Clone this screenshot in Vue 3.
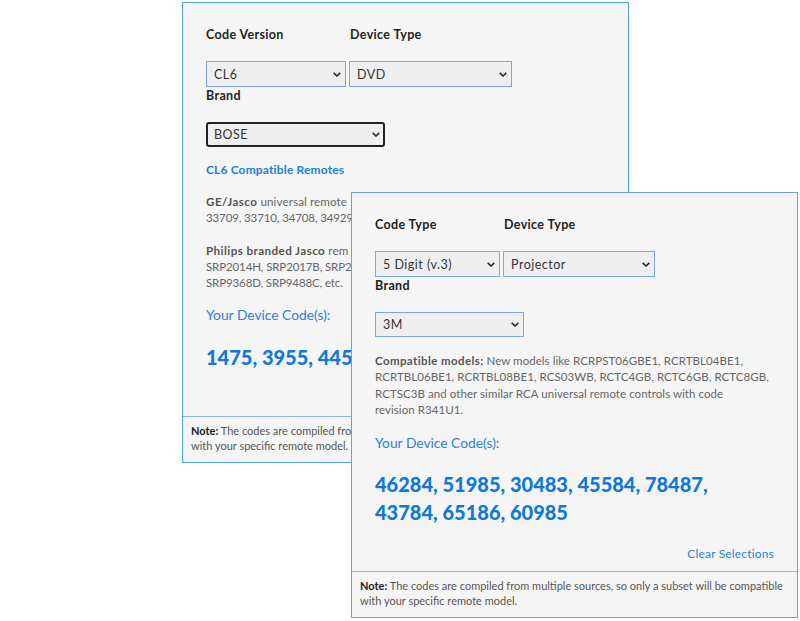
<template>
  <div class="canvas">
    <section class="win win-back">
      <div class="body">
        <div class="labels">
          <label class="lbl lbl-version">Code Version</label>
          <label class="lbl">Device Type</label>
        </div>
        <div class="selects">
          <select class="sel sel-version"><option>CL6</option></select>
          <select class="sel sel-device"><option>DVD</option></select>
        </div>
        <label class="lbl brand">Brand</label>
        <select class="sel sel-bose"><option>BOSE</option></select>
        <a class="compat-link">CL6 Compatible Remotes</a>
        <p class="txt first"><b>GE/Jasco</b> universal remote<br /><span class="nums">33709, 33710, 34708, 34929,</span></p>
        <p class="txt"><b>Philips branded Jasco</b> rem<br /><span class="nums">SRP2014H, SRP2017B, SRP2</span><br /><span class="nums">SRP9368D, SRP9488C, etc.</span></p>
        <div class="your">Your Device Code(s):</div>
        <div class="codes">1475, 3955, 445</div>
      </div>
      <div class="note note-back"><b>Note:</b> The codes are compiled fro<br />with your specific remote model.</div>
    </section>

    <section class="win win-front">
      <div class="body">
        <div class="labels">
          <label class="lbl lbl-type">Code Type</label>
          <label class="lbl">Device Type</label>
        </div>
        <div class="selects">
          <select class="sel sel-type"><option>5 Digit (v.3)</option></select>
          <select class="sel sel-proj"><option>Projector</option></select>
        </div>
        <label class="lbl brand">Brand</label>
        <select class="sel sel-3m"><option>3M</option></select>
        <p class="txt models"><b>Compatible models:</b> New models like RCRPST06GBE1, RCRTBL04BE1, RCRTBL06BE1, RCRTBL08BE1, RCS03WB, RCTC4GB, RCTC6GB, RCTC8GB, RCTSC3B and other similar RCA universal remote controls with code<br />revision R341U1.</p>
        <div class="your">Your Device Code(s):</div>
        <div class="codes">46284, 51985, 30483, 45584, 78487, 43784, 65186, 60985</div>
        <div class="clear-row"><a class="clear">Clear Selections</a></div>
      </div>
      <div class="note"><b>Note:</b> The codes are compiled from multiple sources, so only a subset will be compatible with your specific remote model.</div>
    </section>
  </div>
</template>

<script setup>
</script>

<style>
html, body {
  margin: 0;
  background: #fff;
}
</style>

<style scoped>
.canvas {
  position: relative;
  width: 800px;
  height: 621px;
  overflow: hidden;
  font-family: "Lato", "Noto Sans", sans-serif;
  color: #555;
}

.win {
  position: absolute;
  width: 447px;
  box-sizing: border-box;
  background: #f5f5f5;
  display: flex;
  flex-direction: column;
}

.win-back {
  left: 182px;
  top: 2px;
  height: 461px;
  border: 1px solid #4fa3ec;
}

.win-front {
  left: 351px;
  top: 192px;
  height: 426px;
  border: 1px solid #6b9fe4;
}

.body {
  flex: 1;
  padding: 24px 23px 0;
}

.labels {
  display: flex;
  height: 34px;
}

.lbl {
  display: block;
  font-size: 12.5px;
  font-weight: 700;
  line-height: 16px;
  color: #222;
  letter-spacing: 0.35px;
}

.lbl-version {
  width: 144px;
}

.lbl-type {
  width: 129px;
}

.selects {
  display: flex;
  gap: 3px;
}

.sel {
  display: block;
  height: 25px;
  box-sizing: border-box;
  padding: 0 14px 0 7px;
  font-family: inherit;
  font-size: 12.5px;
  letter-spacing: 0.5px;
  color: #333;
  background-color: #efefef;
  border: 1px solid #7aa5e6;
  border-radius: 0;
  appearance: none;
  background-image: url("data:image/svg+xml,%3Csvg xmlns='http://www.w3.org/2000/svg' width='8' height='5' viewBox='0 0 8 5'%3E%3Cpath d='M.7.9 4 4 7.3.9' fill='none' stroke='%23222' stroke-width='1.5'/%3E%3C/svg%3E");
  background-repeat: no-repeat;
  background-position: right 4px center;
}

.selects .sel {
  height: 26px;
}

.sel-version { width: 140px; }
.sel-device { width: 163px; }
.sel-type { width: 125px; }
.sel-proj { width: 152px; }
.sel-3m { width: 149px; }

.sel-bose {
  width: 179px;
  padding-left: 6px;
  border: 2px solid #222;
  border-radius: 3px;
  background-position: right 3px center;
}

.brand {
  margin-top: 1px;
  height: 34px;
}

.compat-link {
  display: block;
  margin-top: 15px;
  font-size: 12px;
  font-weight: 700;
  letter-spacing: 0.15px;
  line-height: 16px;
  color: #1b7fdc;
}

.txt {
  margin: 16px 0 0;
  font-size: 11.7px;
  letter-spacing: 0.08px;
  line-height: 16.3px;
  color: #666;
  white-space: nowrap;
}

.txt b {
  color: #555;
  letter-spacing: 0.4px;
}

.nums {
  font-size: 11.5px;
  letter-spacing: -0.12px;
  line-height: 1;
}

.first {
  margin-top: 15px;
}

.models {
  margin-top: 16px;
  font-size: 11.5px;
  letter-spacing: 0.06px;
  white-space: normal;
}

.your {
  margin-top: 15px;
  font-size: 13.8px;
  line-height: 20px;
  color: #2b80d9;
}

.codes {
  margin-top: 18px;
  font-size: 20px;
  font-weight: 900;
  line-height: 28px;
  color: #0f78d8;
}

.win-front .codes {
  margin-top: 17px;
}

.clear-row {
  display: flex;
  justify-content: flex-end;
  margin-top: 20px;
}

.clear {
  font-size: 12px;
  letter-spacing: 0.17px;
  line-height: 16px;
  color: #2b80d9;
}

.note {
  padding: 6px 8px 9px;
  font-size: 11px;
  line-height: 15px;
  color: #555;
  border-top: 1px solid #8db6ea;
}

.note b {
  color: #222;
}
</style>
